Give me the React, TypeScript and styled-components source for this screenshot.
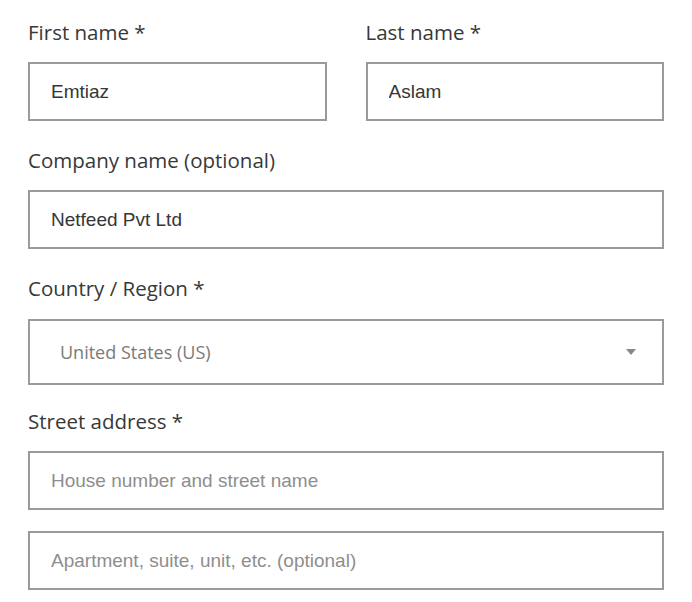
import React from "react";
import styled, { createGlobalStyle } from "styled-components";

const Global = createGlobalStyle`
  html, body { margin: 0; padding: 0; background: #ffffff; }
  * { box-sizing: border-box; }
`;

const Form = styled.form`
  width: 692px;
  padding: 18px 28px 0 28px;
  display: flex;
  flex-direction: column;
  gap: 25px;
`;

const Row = styled.div`
  display: grid;
  grid-template-columns: 1fr 1fr;
  column-gap: 39px;
`;

const Field = styled.div`
  display: flex;
  flex-direction: column;
`;

const Label = styled.label`
  font-family: "Open Sans", "Noto Sans", sans-serif;
  font-size: 20.5px;
  line-height: 28px;
  color: #383838;
  margin-bottom: 16px;
`;

const TextInput = styled.input<{ $spaced?: boolean }>`
  width: 100%;
  height: 59px;
  margin: ${(p) => (p.$spaced ? "21px 0 0 0" : "0")};
  padding: 0 0 0 21px;
  border: 2px solid #9a9a9a;
  border-radius: 0;
  background: #fff;
  font-family: "Liberation Sans", Arial, sans-serif;
  font-size: 19px;
  color: #363636;
  outline: none;
  &::placeholder {
    color: #8e8e8e;
    opacity: 1;
  }
`;

const SelectBox = styled.div`
  height: 66px;
  margin-top: 1px;
  border: 2px solid #9a9a9a;
  display: flex;
  align-items: center;
  justify-content: space-between;
  padding: 0 26px 0 30px;
  background: #fff;
`;

const SelectValue = styled.span`
  font-family: "Open Sans", "Noto Sans", sans-serif;
  font-size: 18px;
  color: #7a7a7a;
`;

const Arrow = styled.svg`
  width: 10px;
  height: 6px;
  display: block;
`;

const StreetField = styled(Field)`
  margin-top: -3px;
`;

export default function App() {
  return (
    <>
      <Global />
      <Form onSubmit={(e) => e.preventDefault()}>
        <Row>
          <Field>
            <Label>First name *</Label>
            <TextInput defaultValue="Emtiaz" />
          </Field>
          <Field>
            <Label>Last name *</Label>
            <TextInput defaultValue="Aslam" />
          </Field>
        </Row>
        <Field>
          <Label>Company name (optional)</Label>
          <TextInput defaultValue="Netfeed Pvt Ltd" />
        </Field>
        <Field>
          <Label>Country / Region *</Label>
          <SelectBox>
            <SelectValue>United States (US)</SelectValue>
            <Arrow viewBox="0 0 10 6">
              <path d="M0 0 L10 0 L5 6 Z" fill="#888" />
            </Arrow>
          </SelectBox>
        </Field>
        <StreetField>
          <Label>Street address *</Label>
          <TextInput placeholder="House number and street name" />
          <TextInput $spaced placeholder="Apartment, suite, unit, etc. (optional)" />
        </StreetField>
      </Form>
    </>
  );
}
